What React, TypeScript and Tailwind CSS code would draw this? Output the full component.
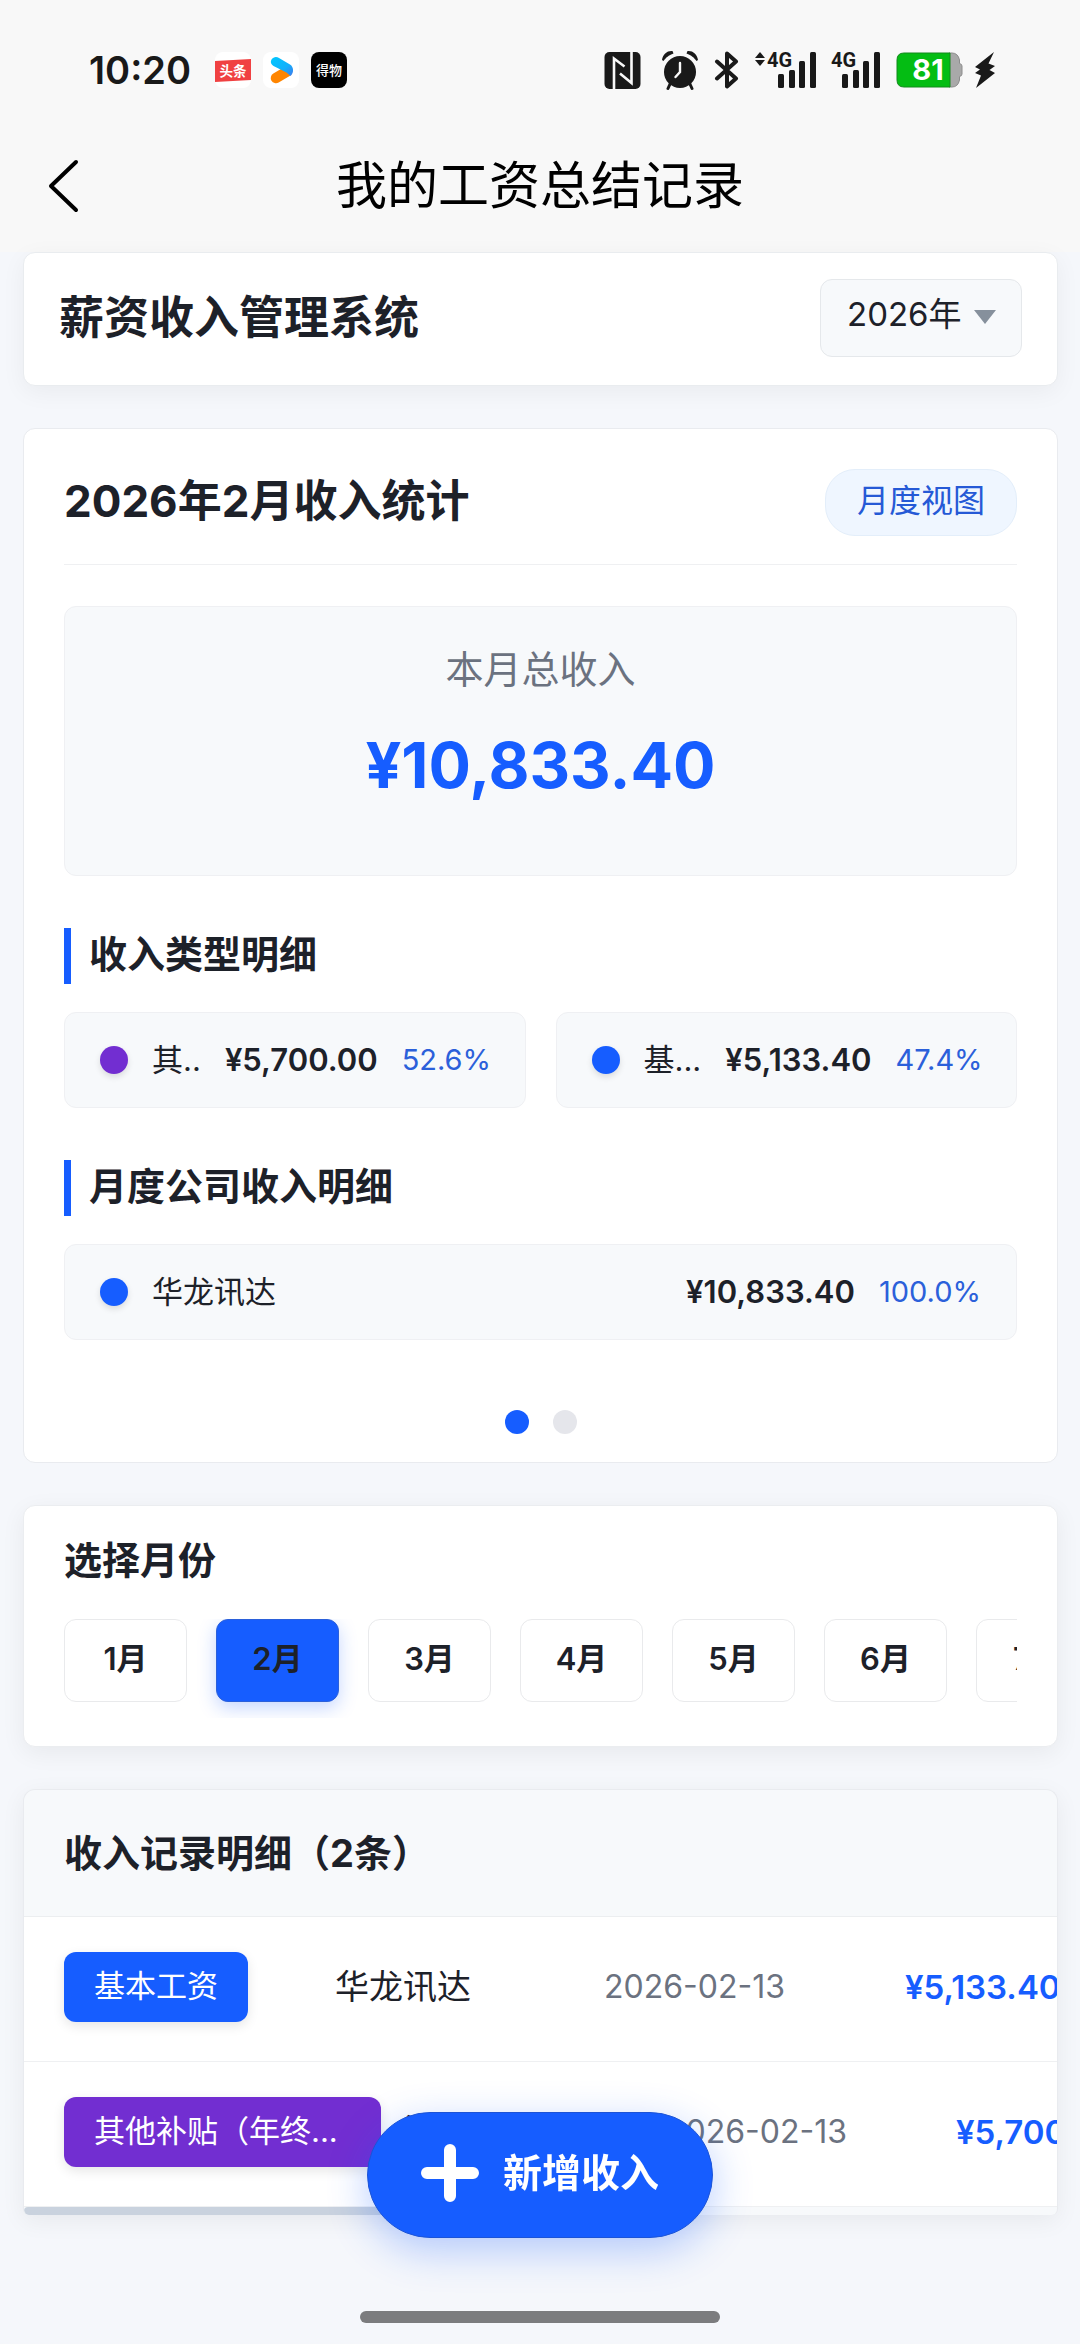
import { useState } from "react";

type Item = { name: string; amount: string; percent: string; dot: string };
type Entry = {
  tag: string;
  tagStyle: string;
  company: string;
  date: string;
  dateWidth: string;
  amount: string;
};

const incomeTypes: Item[] = [
  { name: "其..", amount: "¥5,700.00", percent: "52.6%", dot: "bg-[#722ed1]" },
  { name: "基...", amount: "¥5,133.40", percent: "47.4%", dot: "bg-[#165dff]" },
];

const companies: Item[] = [
  { name: "华龙讯达", amount: "¥10,833.40", percent: "100.0%", dot: "bg-[#165dff]" },
];

const months = ["1月", "2月", "3月", "4月", "5月", "6月", "7月"];

const entries: Entry[] = [
  {
    tag: "基本工资",
    tagStyle: "w-[184px] bg-[#165dff]",
    company: "华龙讯达",
    date: "2026-02-13",
    dateWidth: "w-[301px]",
    amount: "¥5,133.40",
  },
  {
    tag: "其他补贴（年终...",
    tagStyle: "w-[317px] bg-[#722ed1]",
    company: "华龙讯达",
    date: "2026-02-13",
    dateWidth: "w-[290px]",
    amount: "¥5,700.00",
  },
];

function Signal({ arrows }: { arrows?: boolean }) {
  return (
    <svg className="overflow-visible" width={arrows ? 62 : 50} height="38" viewBox={arrows ? "-12 0 62 38" : "0 0 50 38"} fill="#191919" aria-hidden="true">
      {arrows && (
        <>
          <path d="M-7 1L-2 7H-12Z" />
          <path d="M-7 15L-2 9H-12Z" />
        </>
      )}
      <text x="0" y="16" fontSize="20" fontWeight="700" fontFamily="Roboto, sans-serif">
        4G
      </text>
      <rect x="11" y="23" width="6" height="14" rx="1.5" />
      <rect x="22" y="19" width="6" height="18" rx="1.5" />
      <rect x="32" y="10" width="6" height="27" rx="1.5" />
      <rect x="43" y="1" width="6" height="36" rx="1.5" />
    </svg>
  );
}

function StatusBar() {
  return (
    <div className="flex h-[140px] items-center justify-between pr-[84px] pl-[89px]">
      <div className="flex items-center">
        <span className="w-[126px] text-[38px] leading-[48px] font-semibold text-[#191919]">10:20</span>
        <div className="flex gap-3">
          <svg width="36" height="36" viewBox="0 0 36 36" aria-hidden="true">
            <rect width="36" height="36" rx="8" fill="#fff" />
            <path d="M0 9L36 7V28L0 30Z" fill="#f04142" />
            <text x="4.500" y="24" fontSize="13.5" fontWeight="700" fill="#fff" fontFamily="Noto Sans CJK SC, sans-serif">
              头条
            </text>
          </svg>
          <svg width="36" height="36" viewBox="0 0 36 36" aria-hidden="true">
            <defs>
              <linearGradient id="play" x1="0" y1="0" x2="1" y2="1">
                <stop offset="0" stopColor="#00c8ff" />
                <stop offset="0.6" stopColor="#12b0fb" />
                <stop offset="1" stopColor="#3f7bee" />
              </linearGradient>
            </defs>
            <rect width="36" height="36" rx="8" fill="#fff" />
            <path d="M13 26L24 19.500" stroke="#ff8500" strokeWidth="10.500" strokeLinecap="round" />
            <path d="M10.500 5.800C12.500 4.600 14.500 5.200 16 6L27 12.500C31 15 31 21 27.500 24L23.500 20.500L10.500 14C7 12 7 7.800 10.500 5.800Z" fill="url(#play)" />
          </svg>
          <svg width="36" height="36" viewBox="0 0 36 36" aria-hidden="true">
            <rect width="36" height="36" rx="8" fill="#000" />
            <text x="5" y="23" fontSize="13" fontWeight="500" fill="#fff" fontFamily="Noto Sans CJK SC, sans-serif">
              得物
            </text>
          </svg>
        </div>
      </div>
      <div className="flex items-center">
        <svg className="mr-5" width="37" height="37" viewBox="0 0 37 37" aria-hidden="true">
          <rect x="0.500" width="36" height="37" rx="5" fill="#191919" />
          <path d="M10 37V6.500L20.500 14.500" fill="none" stroke="#f8f8f8" strokeWidth="2.600" />
          <path d="M27.500 0V31L16 21.500" fill="none" stroke="#f8f8f8" strokeWidth="2.600" />
        </svg>
        <svg className="mr-[15px]" width="38" height="40" viewBox="0 0 38 40" aria-hidden="true">
          <circle cx="19" cy="22" r="16" fill="#191919" />
          <path d="M1 10C2 4 6 0.500 11.500 1L12.500 3.500C7.500 5.500 5 7.500 2.500 11Z" fill="#191919" />
          <path d="M37 10C36 4 32 0.500 26.500 1L25.500 3.500C30.500 5.500 33 7.500 35.500 11Z" fill="#191919" />
          <path d="M9.500 33L7 38.500M28.500 33L31 38.500" stroke="#191919" strokeWidth="3" strokeLinecap="round" />
          <path d="M19 13V22L14.500 27" fill="none" stroke="#f8f8f8" strokeWidth="2.400" strokeLinecap="round" />
        </svg>
        <svg className="mr-[15px]" width="26" height="38" viewBox="0 0 26 38" fill="none" stroke="#191919" strokeWidth="4" strokeLinejoin="round" strokeLinecap="round" aria-hidden="true">
          <path d="M3 10.500L22 27.500L13 35.500V2.500L22 10.500L3 27.500" />
        </svg>
        <div className="mr-[15px] flex gap-[14px]">
          <Signal arrows />
          <Signal />
        </div>
        <svg width="67" height="36" viewBox="0 0 67 36" aria-hidden="true">
          <path d="M53 1H56Q62 1 63.500 8V11.500Q66 12 66 14V22Q66 24 63.500 24.500V28Q62 35 56 35H53Z" fill="#a9a9a9" stroke="#8c8c8c" strokeWidth="1" />
          <path d="M8 1H54V35H8Q1 35 1 28V8Q1 1 8 1Z" fill="#04bd13" stroke="#128a1c" strokeWidth="1" />
          <text x="32" y="28" textAnchor="middle" fontSize="29" fontWeight="700" fill="#fff" fontFamily="Inter, sans-serif">
            81
          </text>
        </svg>
        <svg className="ml-[11px]" width="22" height="38" viewBox="0 0 22 38" fill="#191919" aria-hidden="true">
          <path d="M20 1L1 16L6 18.500L1 22L7 24.500L2 37L21 22L15.500 19L21 15L14.500 12.500Z" />
        </svg>
      </div>
    </div>
  );
}

function SectionTitle({ children }: { children: string }) {
  return (
    <h3 className="border-l-[7px] border-[#165dff] pb-1 pl-[18px] text-[38px] leading-[52px] font-bold">
      {children}
    </h3>
  );
}

function ItemRow({ item }: { item: Item }) {
  return (
    <li className="flex h-24 min-w-0 flex-1 items-center gap-6 rounded-xl border border-[#eff0f3] bg-[#f7f9fb] px-[35px]">
      <span className={`size-7 shrink-0 rounded-full shadow-[0_3px_6px_rgba(0,0,0,0.12)] ${item.dot}`} />
      <span className="flex-1 text-[31px] leading-[44px] whitespace-nowrap">{item.name}</span>
      <span className="text-[31px] leading-[44px] font-semibold">{item.amount}</span>
      <span className="text-[29px] leading-[44px] text-[#2b60da]">{item.percent}</span>
    </li>
  );
}

export default function App() {
  const [month, setMonth] = useState("2月");
  const [year, setYear] = useState("2026");

  return (
    <div className="flex min-h-screen flex-col bg-[#f5f7fb] font-['Inter','Noto_Sans_CJK_SC',sans-serif] text-[#1d2129]">
      <header className="bg-[#f8f8f8]">
        <StatusBar />
        <div className="grid h-28 grid-cols-[140px_1fr_140px] items-center pb-5">
          <button type="button" aria-label="返回" className="flex h-full items-center pl-[47px]">
            <svg width="34" height="54" viewBox="0 0 34 54" fill="none" stroke="#000" strokeWidth="4" strokeLinecap="round" strokeLinejoin="round" aria-hidden="true">
              <path d="M29 3L4 27L29 51" />
            </svg>
          </button>
          <h1 className="text-center text-[51px] leading-[64px] text-black">我的工资总结记录</h1>
        </div>
      </header>

      <main className="flex flex-col gap-[42px] pr-[22px] pb-32 pl-[23px]">
        <section className="flex items-center justify-between rounded-xl border border-[#e9ecef] bg-white px-[35px] pt-[26px] pb-7 shadow-[0_6px_24px_rgba(0,0,0,0.05)]">
          <h2 className="text-[45px] leading-[60px] font-bold">薪资收入管理系统</h2>
          <div className="relative">
            <select
              aria-label="年份"
              value={year}
              onChange={(e) => setYear(e.target.value)}
              className="block h-[78px] w-[202px] appearance-none rounded-xl border border-[#e5e8eb] bg-[#f7f9fb] pb-[6px] pl-[26px] text-[33px]"
            >
              <option value="2026">2026年</option>
              <option value="2025">2025年</option>
            </select>
            <svg className="pointer-events-none absolute top-[31px] right-[26px]" width="22" height="14" viewBox="0 0 22 14" aria-hidden="true">
              <path d="M0 0H22L11 14Z" fill="#86909c" />
            </svg>
          </div>
        </section>

        <section className="rounded-xl border border-[#e9ebef] bg-white px-10 pt-10 pb-7">
          <div className="flex items-center justify-between border-b border-[#eff0f2] pb-7">
            <h2 className="pb-1 text-[44px] leading-[60px] font-bold">2026年2月收入统计</h2>
            <button type="button" className="h-[67px] rounded-[30px] border border-[#e3eefa] bg-[#eff6ff] px-[31px] pb-1 text-[32px] leading-[44px] text-[#2559d6]">
              月度视图
            </button>
          </div>
          <div className="mt-[41px] flex h-[270px] flex-col items-center rounded-xl border border-[#eff0f3] bg-[#f7f9fb] pt-9">
            <p className="text-[38px] leading-[52px] text-[#6b7280]">本月总收入</p>
            <p className="mt-7 text-[63px] leading-[84px] font-bold text-[#165dff]">¥10,833.40</p>
          </div>
          <div className="mt-[52px] flex flex-col gap-7">
            <SectionTitle>收入类型明细</SectionTitle>
            <ul className="flex gap-[30px]">
              {incomeTypes.map((item) => (
                <ItemRow key={item.name} item={item} />
              ))}
            </ul>
          </div>
          <div className="mt-[52px] flex flex-col gap-7">
            <SectionTitle>月度公司收入明细</SectionTitle>
            <ul className="flex">
              {companies.map((item) => (
                <ItemRow key={item.name} item={item} />
              ))}
            </ul>
          </div>
          <div className="mt-[70px] flex justify-center gap-6">
            <button type="button" aria-label="第1页" className="size-6 rounded-full bg-[#165dff]" />
            <button type="button" aria-label="第2页" className="size-6 rounded-full bg-[#e5e6eb]" />
          </div>
        </section>

        <section className="rounded-xl border border-[#ebedf0] bg-white px-10 pt-7 pb-7 shadow-[0_6px_24px_rgba(0,0,0,0.06)]">
          <h2 className="pb-1 text-[38px] leading-[52px] font-bold">选择月份</h2>
          <div className="mt-[29px] flex gap-[29px] overflow-x-auto pb-4 [scrollbar-width:none]">
            {months.map((m) => (
              <button
                key={m}
                type="button"
                onClick={() => setMonth(m)}
                className={`h-[83px] w-[123px] shrink-0 rounded-xl border pb-1 text-[31px] leading-[44px] font-semibold ${
                  m === month
                    ? "border-[#2b60da] bg-[#165dff] shadow-[0_6px_18px_rgba(22,93,255,0.25)]"
                    : "border-[#e9eaec] bg-white"
                }`}
              >
                {m}
              </button>
            ))}
          </div>
        </section>

        <section className="overflow-hidden rounded-xl rounded-b-md border border-b-0 border-[#e9ebef] bg-[#f7f9fb] shadow-[0_6px_24px_rgba(0,0,0,0.06)]">
          <h2 className="border-b border-[#eceef0] px-10 py-9 text-[38px] leading-[54px] font-bold">
            收入记录明细（2条）
          </h2>
          <ul className="overflow-hidden bg-white">
            {entries.map((entry) => (
              <li key={entry.tag} className="flex h-[145px] items-center border-b border-[#eff0f2] px-10 pb-1">
                <div className="min-w-[271px] shrink-0 pr-4">
                  <span className={`block h-[70px] rounded-xl px-[30px] text-[31px] leading-[68px] whitespace-nowrap text-white shadow-[0_4px_12px_rgba(0,0,0,0.1)] ${entry.tagStyle}`}>
                    {entry.tag}
                  </span>
                </div>
                <span className="w-[269px] shrink-0 text-[34px] leading-[48px]">{entry.company}</span>
                <span className={`shrink-0 text-[32px] leading-[48px] text-[#6b7280] ${entry.dateWidth}`}>{entry.date}</span>
                <span className="shrink-0 text-[33px] leading-[48px] font-semibold text-[#165dff]">{entry.amount}</span>
              </li>
            ))}
          </ul>
          <div className="h-2">
            <div className="h-2 w-3/5 rounded-full bg-[#c9d2de]" />
          </div>
        </section>
      </main>

      <div className="fixed inset-x-0 bottom-[106px] flex justify-center">
        <button
          type="button"
          className="flex h-[126px] items-center gap-6 rounded-full border border-[#1c54d6] bg-[#165dff] px-[53px] pb-1 text-[39px] leading-[56px] font-semibold text-white shadow-[0_12px_40px_rgba(22,93,255,0.3)]"
        >
          <svg width="58" height="58" viewBox="0 0 58 58" stroke="#fff" strokeWidth="12" strokeLinecap="round" aria-hidden="true">
            <path d="M29 6V52M6 29H52" />
          </svg>
          新增收入
        </button>
      </div>
      <div className="fixed inset-x-0 bottom-[21px] flex justify-center">
        <div className="h-3 w-1/3 rounded-full bg-[#7b7c7e]" />
      </div>
    </div>
  );
}
